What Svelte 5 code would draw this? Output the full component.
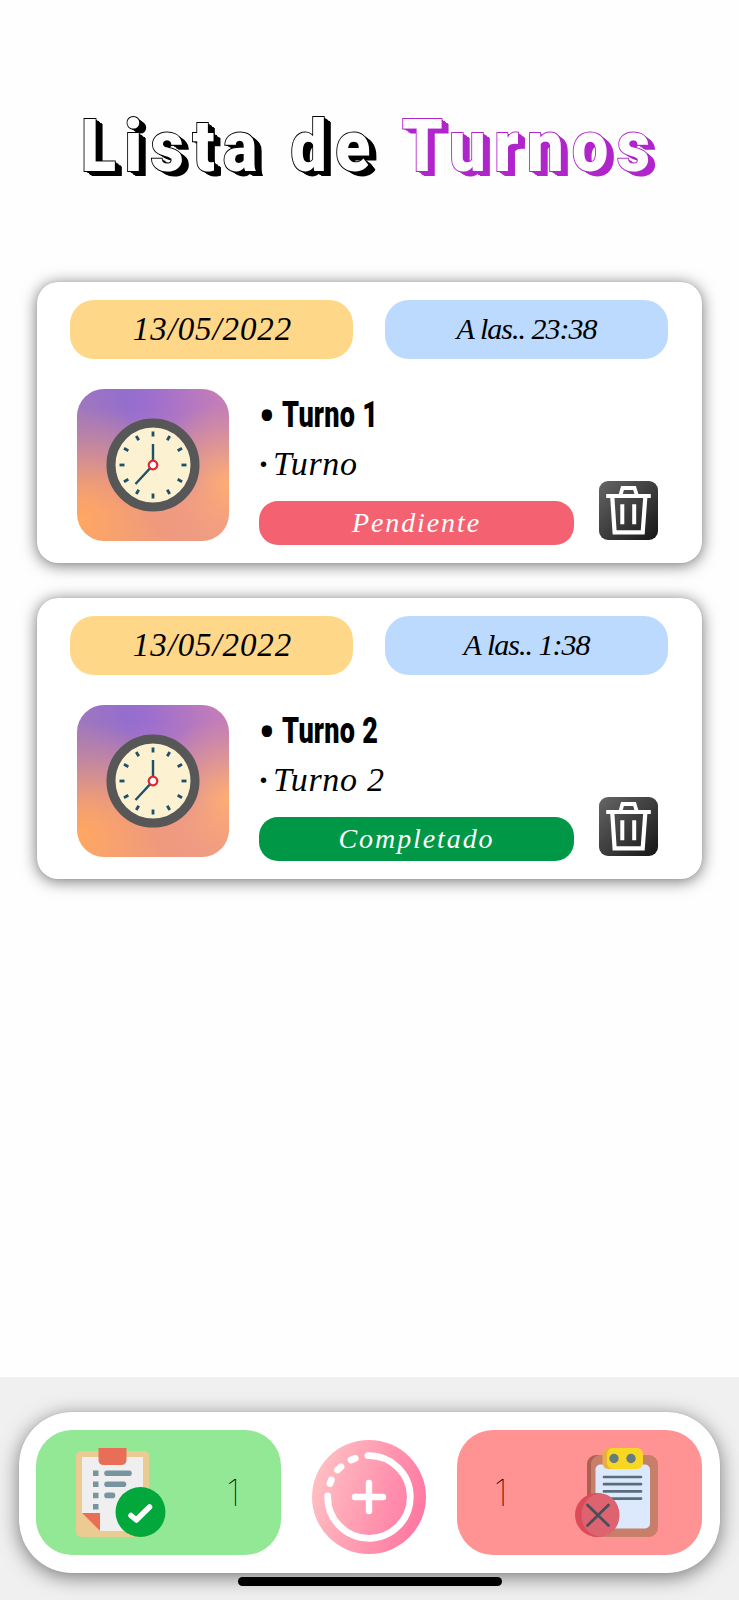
<script>
  const turnos = [
    { fecha: '13/05/2022', hora: 'A las.. 23:38', nombre: 'Turno 1', detalle: 'Turno', estado: 'Pendiente', hecho: false },
    { fecha: '13/05/2022', hora: 'A las.. 1:38', nombre: 'Turno 2', detalle: 'Turno 2', estado: 'Completado', hecho: true }
  ];
  const marks = Array.from({ length: 12 }, (_, i) => i * 30);
  const completados = turnos.filter((t) => t.hecho).length;
  const pendientes = turnos.length - completados;
</script>

<div class="screen">
  <h1><span class="word">Lista de</span><span class="word accent">Turnos</span></h1>

  <main>
    {#each turnos as t}
      <article class="card">
        <div class="pills">
          <div class="pill date"><span>{t.fecha}</span></div>
          <div class="pill hour"><span>{t.hora}</span></div>
        </div>
        <div class="body">
          <div class="thumb">
            <svg width="94" height="94" viewBox="-47 -47 94 94">
              <circle r="42" fill="#fcf2d2" stroke="#565756" stroke-width="9" />
              {#each marks as a}
                <line y1="-33.5" y2="-28.5" stroke="#1f506b" stroke-width="2.8" transform="rotate({a})" />
              {/each}
              <path d="M0-21V0L-17.5 19" fill="none" stroke="#1f506b" stroke-width="2.4" />
              <circle r="4.3" fill="#fff" stroke="#df2730" stroke-width="2.2" />
            </svg>
          </div>
          <div class="info">
            <div class="name"><span class="bullet">•</span><span class="title">{t.nombre}</span></div>
            <div class="detail"><span class="dot">·</span>{t.detalle}</div>
            <div class="state" class:done={t.hecho}>{t.estado}</div>
          </div>
          <button class="trash" aria-label="Eliminar">
            <svg width="59" height="59" viewBox="0 0 59 59" fill="none" stroke="#fff">
              <path d="M7.2 15H51.8" stroke-width="4.2" />
              <path d="M21.5 14L23.5 7H35.5L37.7 14" stroke-width="3.8" />
              <path d="M13.3 16L15.6 51.4H43.7L46.3 16" stroke-width="4.2" />
              <path d="M23.3 23.3V43.3M35.2 23.3V43.3" stroke-width="4" />
            </svg>
          </button>
        </div>
      </article>
    {/each}
  </main>

  <footer>
    <nav>
      <div class="count ok">
        <svg width="90" height="90" viewBox="0 0 90 90">
          <rect x="0" y="3" width="73" height="86" rx="5" fill="#ebcb91" />
          <path d="M6 9H67V83H24L6 65Z" fill="#efeff0" />
          <path d="M6 65H24V83Z" fill="#e96e57" />
          <path d="M22.500 0H50.500V12Q50.500 17 45 17H28Q22.500 17 22.500 12Z" fill="#e96e57" />
          <path d="M17 22.500h5.500v5.500h-5.500zM17 33.500h5.500v5.500h-5.500zM17 44.700h5.500v5.500h-5.500zM17 56h5.500v5.500h-5.500z" fill="#78959f" />
          <path d="M31 25.200H53M31 36.300H47.500M31 47.400H36.500" stroke="#78959f" stroke-width="5.600" stroke-linecap="round" />
          <circle cx="64.500" cy="64" r="25" fill="#03a83c" />
          <path d="M55 67.500L60.300 72L73.500 59" fill="none" stroke="#fff" stroke-width="5.500" stroke-linecap="round" stroke-linejoin="round" />
        </svg>
        <span>{completados}</span>
      </div>

      <button class="add" aria-label="Agregar turno">
        <svg width="114" height="114" viewBox="-57 -57 114 114">
          <defs>
            <linearGradient id="rosa" x1="0" y1=".35" x2="1" y2=".65">
              <stop offset="0" stop-color="#ffc0c3" />
              <stop offset="1" stop-color="#ff76a1" />
            </linearGradient>
          </defs>
          <circle r="57" fill="url(#rosa)" />
          <g fill="none" stroke="#fff" stroke-width="6.800" stroke-linecap="round">
            <path d="M-1-41.300A41.300 41.300 0 1 1-41.300-1" />
            <path d="M-39-13.500L-37.700-17M-31.500-27L-28-30.200M-18-37L-13.800-38.700" />
            <path d="M0-14V14M-14 0H14" stroke-width="6.400" />
          </g>
        </svg>
      </button>

      <div class="count ko">
        <span>{pendientes}</span>
        <svg width="84" height="90" viewBox="0 0 84 90">
          <rect x="12" y="7" width="68" height="82" rx="9" fill="#ad5f50" />
          <rect x="16" y="7" width="67" height="82" rx="9" fill="#c87f6a" />
          <rect x="20.500" y="16.500" width="54.500" height="64" rx="5" fill="#dce9fc" />
          <rect x="27.500" y="0" width="30" height="21" rx="6" fill="#e9ad42" />
          <rect x="32" y="0" width="36" height="21" rx="6" fill="#f8d722" />
          <circle cx="39" cy="10.500" r="4.700" fill="#657c81" />
          <circle cx="56" cy="10.500" r="4.700" fill="#657c81" />
          <path d="M29 29H66M29 36.200H66M29 43.400H66M29 50.600H66" stroke="#586e7b" stroke-width="2.700" stroke-linecap="round" />
          <circle cx="22" cy="67" r="22" fill="#dc4c58" />
          <ellipse cx="25.500" cy="67" rx="19" ry="21.500" fill="#dc636f" />
          <path d="M12.500 57L33.500 77.500M33.500 57L12.500 77.500" stroke="#475058" stroke-width="2.700" stroke-linecap="round" />
        </svg>
      </div>
    </nav>
    <div class="home"></div>
  </footer>
</div>

<style>
  :global(body) { margin: 0; background: #fefefe; }
  .screen {
    box-sizing: border-box;
    width: 739px;
    height: 1600px;
    display: flex;
    flex-direction: column;
    background: #fefefe;
    color: #000;
    overflow: hidden;
  }
  button { border: 0; padding: 0; background: none; }
  svg { display: block; flex: none; }
  h1 {
    box-sizing: border-box;
    height: 282px;
    margin: 0;
    padding: 102px 0 0 81px;
    display: flex;
    font: 900 73px/88px Roboto, sans-serif;
    white-space: nowrap;
  }
  .word {
    --c: #000;
    width: 321px;
    flex: none;
    color: #fff;
    letter-spacing: 9.6px;
    transform: scaleX(.885);
    transform-origin: 0 50%;
    -webkit-text-stroke: 2px var(--c);
    paint-order: stroke fill;
    text-shadow: 1px .6px var(--c), 2px 1.2px var(--c), 3px 1.8px var(--c), 4px 2.4px var(--c), 5px 3px var(--c), 6px 3.6px var(--c), 7px 4.2px var(--c), 8px 4.8px var(--c);
  }
  .accent { --c: #b026cb; }
  main {
    flex: 1;
    padding: 0 37px;
    display: flex;
    flex-direction: column;
    gap: 35.5px;
  }
  .card {
    box-sizing: border-box;
    height: 280.5px;
    padding: 18px 33px 0;
    border-radius: 21px;
    background: #fff;
    box-shadow: 0 2px 16px rgba(0, 0, 0, .56), 0 0 1px rgba(0, 0, 0, .2);
  }
  .pills { display: grid; grid-template-columns: 283px 283px; gap: 32px; }
  .pill {
    height: 59px;
    border-radius: 24px;
    display: flex;
    justify-content: center;
    font: italic 33px/58px "Liberation Serif", serif;
    white-space: pre;
  }
  .date { background: #fed789; letter-spacing: .9px; padding-left: 2px; margin-right: -2px; width: 281px; }
  .hour { background: #bbdafe; font-size: 30px; letter-spacing: -1px; line-height: 58px; }
  .body {
    display: flex;
    padding: 30px 10px 0 7px;
    align-items: flex-start;
  }
  .thumb {
    width: 152px;
    height: 152px;
    flex: none;
    border-radius: 27px;
    display: grid;
    place-items: center;
    background:
      radial-gradient(circle at 100% 62%, #ffad73 0, rgba(255, 173, 115, 0) 46%),
      radial-gradient(circle at 4% 86%, #ffa763 0, rgba(255, 167, 99, 0) 58%),
      radial-gradient(circle at 100% 0, #cb80b4 0, rgba(203, 128, 180, 0) 48%),
      radial-gradient(circle at 0 15%, #a078bc 0, rgba(160, 120, 188, 0) 38%),
      linear-gradient(178deg, #8f69d6 12%, #b37bb8 46%, #e58f8e 78%, #eb9686);
  }
  .info { width: 315px; margin-left: 30px; flex: none; }
  .name { height: 50px; display: flex; font: 900 36px/52px Roboto, sans-serif; white-space: nowrap; }
  .bullet { width: 23px; font-size: 46px; line-height: 54px; height: 50px; transform: scaleX(.9); transform-origin: 0 50%; }
  .title { display: inline-block; letter-spacing: .3px; transform: scaleX(.75); transform-origin: 0 50%; }
  .detail { height: 62px; font: italic 34px/50px "Liberation Serif", serif; letter-spacing: .7px; }
  .dot { display: inline-block; width: 14px; font-weight: 700; }
  .state {
    height: 43.5px;
    border-radius: 19px;
    background: #f46272;
    color: #fff;
    text-align: center;
    font: italic 28px/43px "Liberation Serif", serif;
    letter-spacing: 1.9px;
  }
  .done { background: #009846; }
  .trash {
    width: 59px;
    height: 59px;
    margin: 92px 0 0 25px;
    border-radius: 9px;
    background: linear-gradient(135deg, #666, #151515);
  }
  footer {
    box-sizing: border-box;
    height: 223px;
    padding: 35px 19px 0;
    background: #f0f0f0;
  }
  nav {
    box-sizing: border-box;
    height: 161px;
    padding: 18px 18px 18px 17px;
    border-radius: 53px;
    background: #fff;
    display: flex;
    justify-content: space-between;
    align-items: center;
    box-shadow: 0 4px 20px rgba(0, 0, 0, .5), 0 0 1px rgba(0, 0, 0, .2);
  }
  .count {
    box-sizing: border-box;
    width: 245px;
    height: 125px;
    border-radius: 36px;
    display: flex;
    align-items: center;
    justify-content: space-between;
    font: 100 37px/44px Inter, sans-serif;
  }
  .ok { background: #92e895; padding: 0 41px 0 40px; }
  .ko { background: #ff9393; padding: 0 43px 0 37px; }
  .add { margin-top: 8px; }
  .home { width: 264px; height: 9px; margin: 4px auto 0; border-radius: 5px; background: #000; position: relative; }
</style>
